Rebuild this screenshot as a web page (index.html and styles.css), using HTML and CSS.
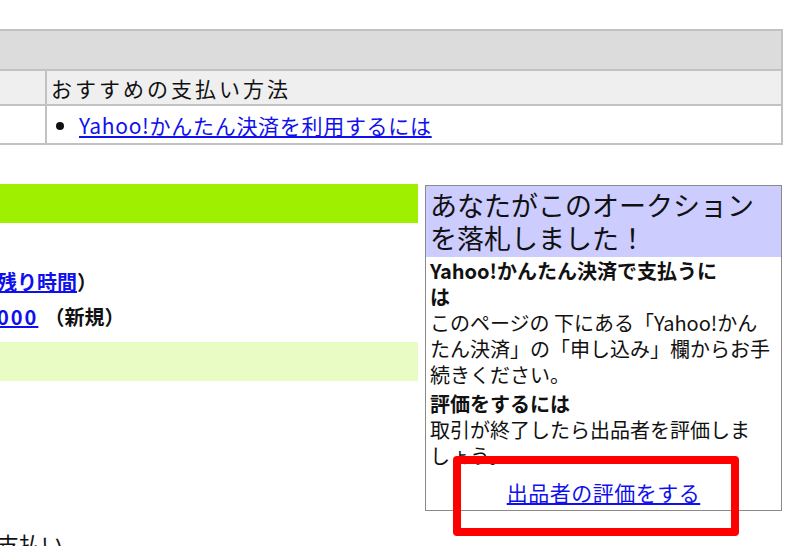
FILE: index.html
```html
<!DOCTYPE html>
<html lang="ja">
<head>
  <meta charset="UTF-8">
  <title>オークション落札</title>
  <link rel="stylesheet" href="styles.css">
</head>
<body>
  <table class="pay-table">
    <tr class="pay-head">
      <td colspan="2"></td>
    </tr>
    <tr class="pay-title">
      <td class="side"></td>
      <td>おすすめの支払い方法</td>
    </tr>
    <tr class="pay-list">
      <td class="side"></td>
      <td>
        <ul>
          <li><a href="#">Yahoo!かんたん決済を利用するには</a></li>
        </ul>
      </td>
    </tr>
  </table>

  <div class="auction">
    <div class="left-col">
      <div class="green-bar"></div>
      <div class="info-lines">
        <p class="clip"><a href="#">残り時間</a>）</p>
        <p class="clip"><a href="#" class="num">000</a>（新規）</p>
      </div>
      <div class="light-bar"></div>
    </div>

    <div class="won-box">
      <div class="won-head">あなたがこのオークション<br>を落札しました！</div>
      <div class="won-body">
        <p><b>Yahoo!かんたん決済で支払うに<br>は</b><br>このページの 下にある「Yahoo!かん<br>たん決済」の「申し込み」欄からお手<br>続きください。</p>
        <p><b>評価をするには</b><br>取引が終了したら出品者を評価しま<br>しょう。</p>
        <p class="rate-link"><a href="#">出品者の評価をする</a></p>
      </div>
      <div class="mark"></div>
    </div>
  </div>

  <p class="bottom-text clip">支払い</p>
</body>
</html>
```

FILE: styles.css
```css
body {
  margin: 0;
  font-family: "Noto Sans CJK JP", "DejaVu Sans", sans-serif;
  color: #111;
  overflow: hidden;
}

a {
  color: #1010ee;
}

p {
  margin: 0;
}

/* payment table */
.pay-table {
  margin-top: 29px;
  width: 783px;
  border-collapse: collapse;
  font-size: 21px;
}

.pay-table td {
  border: 2px solid #c2c2c2;
  padding: 0 0 0 4px;
}

.pay-table .side {
  width: 41px;
  border-left: none;
}

.pay-head td {
  height: 38px;
  background-color: #dcdcdc;
  border-left: none;
}

.pay-title td {
  height: 33px;
  background-color: #efefef;
  letter-spacing: 3px;
}

.pay-list td {
  height: 37px;
}

.pay-list ul {
  margin: 0;
  padding-left: 28px;
}

.pay-list li {
  font-size: 21px;
  letter-spacing: 0.7px;
}

/* auction area */
.auction {
  display: flex;
  gap: 7px;
  align-items: flex-start;
  margin-top: 39px;
}

.left-col {
  width: 418px;
}

.green-bar {
  height: 39px;
  background-color: #9ff000;
}

.info-lines {
  padding-top: 41px;
  padding-bottom: 8px;
  font-size: 20px;
  font-weight: bold;
  line-height: 35px;
}

.info-lines .num {
  letter-spacing: 2px;
  margin-right: 6px;
}

.clip {
  margin-left: -3px;
}

.light-bar {
  height: 39px;
  background-color: #e8fcc4;
}

.won-box {
  position: relative;
  width: 355px;
  margin-top: 1px;
  border: 1px solid #8a8a8a;
}

.won-head {
  background-color: #ccccff;
  font-size: 27px;
  line-height: 33px;
  padding: 2px 4px 3px;
}

.won-body {
  padding: 1px 4px 5px;
  font-size: 20px;
  line-height: 26px;
  white-space: nowrap;
}

.won-body p + p {
  margin-top: 3px;
}

.won-body .rate-link {
  margin-top: 10px;
  text-align: center;
  font-size: 21px;
  letter-spacing: 0.5px;
}

/* red annotation frame */
.mark {
  position: absolute;
  left: 27px;
  top: 270px;
  width: 270px;
  height: 64px;
  border: 8px solid #ff0000;
  border-radius: 4px;
}

.bottom-text {
  margin-top: 16px;
  font-size: 22px;
}
```
